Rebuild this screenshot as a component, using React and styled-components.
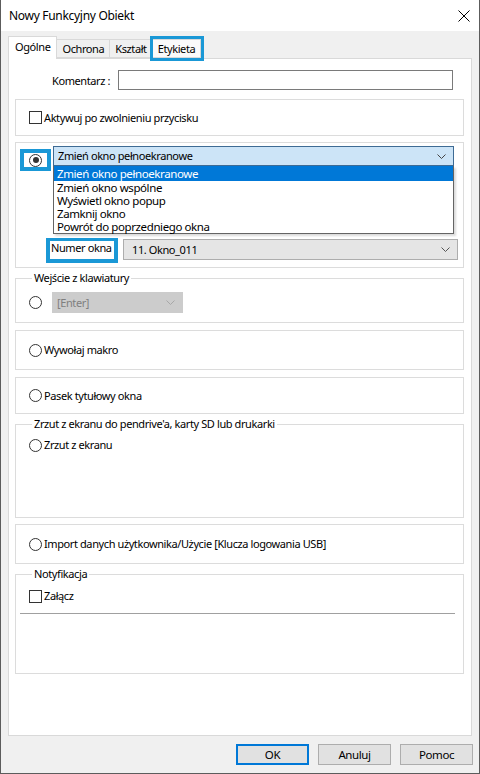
import React from 'react';
import styled, { createGlobalStyle } from 'styled-components';

const Global = createGlobalStyle`
	body {
		margin: 0;
		font-family: "Noto Sans", "Liberation Sans", sans-serif;
		font-size: 11px;
		letter-spacing: -0.4px;
		color: #000;
	}
`;

const MARK = '#1a98d6';

const Window = styled.div`
	display: flex;
	flex-direction: column;
	box-sizing: border-box;
	width: 480px;
	height: 774px;
	border: 1px solid #5c5c5c;
	border-top: none;
	background: #f0f0f0;
`;

const TitleBar = styled.div`
	display: flex;
	align-items: center;
	justify-content: space-between;
	height: 31px;
	padding: 0 8px 0 8px;
	background: #fff;
	font-size: 12px;
	letter-spacing: -0.3px;
`;

const Close = styled.div`
	display: flex;
	width: 12px;
	height: 12px;
	margin-right: 1px;
`;

const Body = styled.div`
	display: flex;
	flex-direction: column;
	flex: 1;
	padding: 0 7px;
`;

const TabStrip = styled.div`
	display: flex;
	align-items: flex-end;
	height: 27px;
`;

const Tab = styled.div`
	position: relative;
	box-sizing: border-box;
	height: ${ props => props.active ? '23px' : '19px' };
	margin-bottom: ${ props => props.active ? '-1px' : '0' };
	padding: ${ props => props.active ? '3px 6px 0 6px' : '2px 5px 0 5px' };
	border: 1px solid #d9d9d9;
	border-bottom: ${ props => props.active ? 'none' : '1px solid #d9d9d9' };
	border-left: ${ props => props.first || props.active ? '1px solid #d9d9d9' : 'none' };
	background: ${ props => props.active ? '#fff' : props.mark ? '#fafafa' : '#f0f0f0' };
	box-shadow: ${ props => props.mark ? `0 0 0 3px ${ MARK }` : 'none' };
	z-index: ${ props => props.active ? 2 : props.mark ? 3 : 1 };
	line-height: 14px;
	white-space: nowrap;
`;

const Panel = styled.div`
	display: flex;
	flex-direction: column;
	flex: 1;
	position: relative;
	z-index: 1;
	padding: 0 7px 0 6px;
	border: 1px solid #d9d9d9;
	background: #fff;
`;

const CommentRow = styled.div`
	display: flex;
	align-items: center;
	gap: 8px;
	margin-top: 11px;
`;

const CommentLabel = styled.span`
	width: 95px;
	text-align: right;
	white-space: nowrap;
`;

const TextInput = styled.div`
	box-sizing: border-box;
	width: 335px;
	height: 20px;
	border: 1px solid #7a7a7a;
	background: #fff;
`;

const Box = styled.div`
	display: flex;
	flex-direction: ${ props => props.column ? 'column' : 'row' };
	align-items: ${ props => props.column ? 'stretch' : 'center' };
	box-sizing: border-box;
	height: ${ props => props.h }px;
	margin-top: ${ props => props.gap }px;
	padding-left: ${ props => props.column ? 4 : 13 }px;
	border: 1px solid #dcdcdc;
`;

const Group = styled.fieldset`
	box-sizing: border-box;
	height: ${ props => props.h }px;
	margin: ${ props => props.gap }px 0 0 0;
	padding: 0 4px 0 13px;
	min-inline-size: 0;
	border: 1px solid #dcdcdc;
`;

const Legend = styled.legend`
	margin-left: 3px;
	padding: 0 2px 0 2px;
	line-height: 14px;
`;

const Line = styled.div`
	display: flex;
	align-items: ${ props => props.start ? 'flex-start' : 'center' };
	margin-top: ${ props => props.top || 0 }px;
	padding-left: ${ props => props.indent || 0 }px;
	gap: ${ props => props.gap || 2 }px;
	line-height: 14px;
`;

const Radio = styled.span`
	display: inline-flex;
	align-items: center;
	justify-content: center;
	box-sizing: border-box;
	width: 13px;
	height: 13px;
	flex: none;
	border-radius: 50%;
	border: 1px solid #333;
	background: #fff;
	&::after {
		content: '';
		display: ${ props => props.checked ? 'block' : 'none' };
		width: 6px;
		height: 6px;
		border-radius: 50%;
		background: #333;
	}
`;

const Check = styled.span`
	display: inline-block;
	box-sizing: border-box;
	width: 13px;
	height: 13px;
	flex: none;
	border: 1px solid #333;
	background: #fff;
`;

const MarkBox = styled.div`
	display: flex;
	align-items: ${ props => props.top ? 'flex-start' : 'center' };
	justify-content: ${ props => props.top ? 'flex-start' : 'center' };
	box-sizing: border-box;
	width: ${ props => props.w }px;
	height: ${ props => props.h }px;
	margin-top: ${ props => props.mt || 0 }px;
	padding: ${ props => props.top ? '0 0 0 1px' : '0' };
	border: 4px solid ${ MARK };
	border-top-width: ${ props => props.top ? 3 : 4 }px;
	background: #fff;
	line-height: 13px;
	white-space: nowrap;
	flex: none;
`;

const ComboWrap = styled.div`
	position: relative;
	flex: none;
`;

const Combo = styled.div`
	display: flex;
	align-items: center;
	justify-content: space-between;
	box-sizing: border-box;
	width: ${ props => props.w }px;
	height: ${ props => props.h || 20 }px;
	margin-top: ${ props => props.mt || 0 }px;
	padding: 0 7px 0 ${ props => props.pl || 4 }px;
	border: 1px solid ${ props => props.focus ? '#3e6b94' : props.disabled ? '#cccccc' : '#adadad' };
	background: ${ props => props.focus ? '#cce4f7' : props.disabled ? '#cccccc' : '#e5e5e5' };
	color: ${ props => props.disabled ? '#7f7f7f' : '#000' };
	line-height: 14px;
	white-space: nowrap;
	flex: none;
`;

const DropList = styled.ul`
	position: absolute;
	left: 0;
	top: 100%;
	z-index: 5;
	box-sizing: border-box;
	width: 100%;
	margin: 0;
	padding: 0;
	list-style: none;
	border: 1px solid #646464;
	border-top: none;
	background: #fff;
	box-shadow: 2px 2px 2px rgba(0, 0, 0, 0.15);
`;

const DropItem = styled.li`
	display: flex;
	align-items: center;
	height: ${ props => props.selected ? 15 : 13 }px;
	padding-left: 3px;
	line-height: 12px;
	font-size: 11.5px;
	background: ${ props => props.selected ? '#0078d7' : 'transparent' };
	color: ${ props => props.selected ? '#fff' : '#000' };
	white-space: nowrap;
`;

const Rule = styled.div`
	height: 1px;
	margin: 10px 4px 0 -9px;
	background: #a0a0a0;
	border-bottom: 1px solid #fff;
`;

const Footer = styled.div`
	display: flex;
	justify-content: flex-end;
	gap: 9px;
	height: 37px;
	padding-top: 8px;
	box-sizing: border-box;
	margin-right: -1px;
`;

const Button = styled.div`
	display: flex;
	align-items: center;
	justify-content: center;
	box-sizing: border-box;
	width: 73px;
	height: 21px;
	border: ${ props => props.primary ? '2px solid #0078d7' : '1px solid #adadad' };
	background: #e1e1e1;
	font-size: 11.5px;
`;

function Chevron( { color = '#444' } ) {
	return (
		<svg width="9" height="5" viewBox="0 0 9 5">
			<path d="M0.5 0.5 L4.5 4.5 L8.5 0.5" fill="none" stroke={ color } strokeWidth="1" />
		</svg>
	);
}

const screens = [
	'Zmień okno pełnoekranowe',
	'Zmień okno wspólne',
	'Wyświetl okno popup',
	'Zamknij okno',
	'Powrót do poprzedniego okna',
];

export default function App() {
	return (
		<Window>
			<Global />
			<TitleBar>
				<span>Nowy Funkcyjny Obiekt</span>
				<Close>
					<svg width="12" height="12" viewBox="0 0 12 12">
						<path d="M0.5 0.5 L11.5 11.5 M11.5 0.5 L0.5 11.5" stroke="#000" strokeWidth="1" />
					</svg>
				</Close>
			</TitleBar>
			<Body>
				<TabStrip>
					<Tab active first>Ogólne</Tab>
					<Tab>Ochrona</Tab>
					<Tab>Kształt</Tab>
					<Tab mark>Etykieta</Tab>
				</TabStrip>
				<Panel>
					<CommentRow>
						<CommentLabel>Komentarz :</CommentLabel>
						<TextInput />
					</CommentRow>

					<Box h={ 37 } gap={ 9 }>
						<Line>
							<Check />
							<span>Aktywuj po zwolnieniu przycisku</span>
						</Line>
					</Box>

					<Box column h={ 126 } gap={ 6 }>
						<Line start top={ 3 } gap={ 2 }>
							<MarkBox w={ 31 } h={ 22 } mt={ 3 }>
								<Radio checked />
							</MarkBox>
							<ComboWrap>
								<Combo focus w={ 401 }>
									<span>{ screens[ 0 ] }</span>
									<Chevron />
								</Combo>
								<DropList>
									{ screens.map( ( s, i ) => (
										<DropItem key={ s } selected={ 0 === i }>{ s }</DropItem>
									) ) }
								</DropList>
							</ComboWrap>
						</Line>
						<Line start top={ 67 } gap={ 5 } indent={ 26 }>
							<MarkBox top w={ 72 } h={ 25 }>Numer okna</MarkBox>
							<Combo w={ 335 } h={ 21 } pl={ 8 } mt={ 1 }>
								<span>11. Okno_011</span>
								<Chevron color="#555" />
							</Combo>
						</Line>
					</Box>

					<Group h={ 52 } gap={ 3 }>
						<Legend>Wejście z klawiatury</Legend>
						<Line top={ 7 } gap={ 10 }>
							<Radio />
							<Combo disabled w={ 131 } h={ 21 } pl={ 4 }>
								<span>[Enter]</span>
								<Chevron color="#a8a8a8" />
							</Combo>
						</Line>
					</Group>

					<Box h={ 40 } gap={ 7 }>
						<Line>
							<Radio />
							<span>Wywołaj makro</span>
						</Line>
					</Box>

					<Box h={ 37 } gap={ 7 }>
						<Line>
							<Radio />
							<span>Pasek tytułowy okna</span>
						</Line>
					</Box>

					<Group h={ 101 } gap={ 3 }>
						<Legend>Zrzut z ekranu do pendrive'a, karty SD lub drukarki</Legend>
						<Line top={ 7 }>
							<Radio />
							<span>Zrzut z ekranu</span>
						</Line>
					</Group>

					<Box h={ 40 } gap={ 6 }>
						<Line>
							<Radio />
							<span>Import danych użytkownika/Użycie [Klucza logowania USB]</span>
						</Line>
					</Box>

					<Group h={ 107 } gap={ 3 }>
						<Legend>Notyfikacja</Legend>
						<Line top={ 8 }>
							<Check />
							<span>Załącz</span>
						</Line>
						<Rule />
					</Group>
				</Panel>
				<Footer>
					<Button primary>OK</Button>
					<Button>Anuluj</Button>
					<Button>Pomoc</Button>
				</Footer>
			</Body>
		</Window>
	);
}
